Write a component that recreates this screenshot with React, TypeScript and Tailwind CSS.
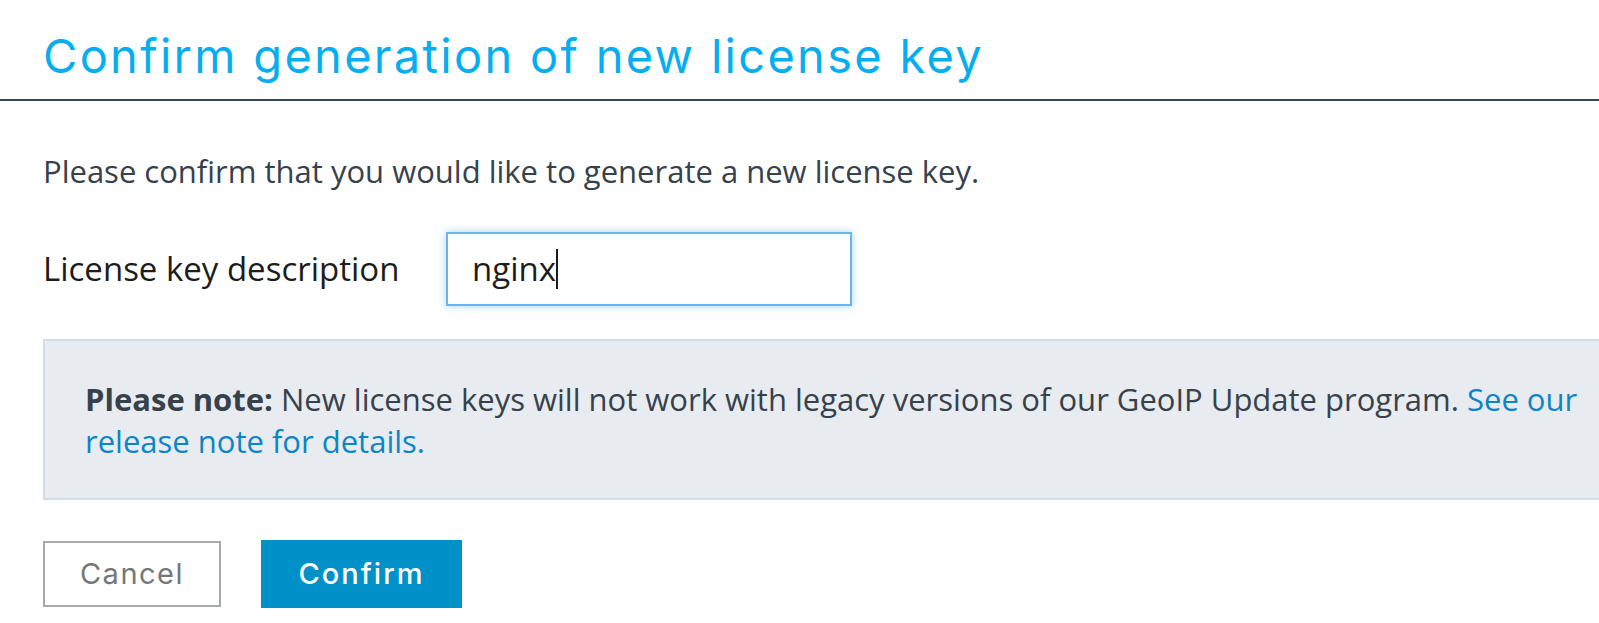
import React from "react";

const body = { fontFamily: '"Open Sans", "Noto Sans", sans-serif' };
const display = { fontFamily: 'Inter, "Noto Sans", sans-serif' };

export default function App() {
  return (
    <div className="w-full h-[623px] overflow-hidden bg-white">
      <div className="px-[43px] pt-[27px] pb-[15px]">
        <h1
          className="text-[47px] leading-[57px] font-normal text-[#05aef0] tracking-[2.3px]"
          style={display}
        >
          Confirm generation of new license key
        </h1>
      </div>
      <div className="h-[2px] w-full bg-[#37474f]" />
      <div className="px-[43px] pt-[49px]" style={body}>
        <p className="text-[31px] leading-[42px] text-[#36414c]">
          Please confirm that you would like to generate a new license key.
        </p>
        <div className="mt-[40px] flex items-center">
          <label className="w-[403px] shrink-0 text-[33px] leading-[42px] text-[#1c1c1c]">
            License key description
          </label>
          <div className="w-[406px] h-[74px] shrink-0 border-2 border-[#6cb4ef] bg-white shadow-[0_0_8px_rgba(102,175,233,0.55)] flex items-center pl-[24px]">
            <span className="text-[33px] leading-[42px] text-[#1c1c1c]">nginx</span>
            <span className="inline-block w-[2px] h-[40px] bg-[#1c1c1c]" />
          </div>
        </div>
        <div className="mt-[33px] w-[1620px] border-2 border-[#d4dce4] bg-[#e8ebf0] pl-[40px] pr-[40px] pt-[37px] pb-[36px]">
          <p className="text-[31px] leading-[42px] text-[#36414c]">
            <strong className="font-bold">Please note:</strong> New license keys will not work with legacy
            versions of our GeoIP Update program.{" "}
            <a href="#" className="text-[#0a86c8]">
              See our release note for details.
            </a>
          </p>
        </div>
        <div className="mt-[40px] flex items-center gap-[40px]" style={display}>
          <button className="w-[178px] h-[66px] border-2 border-[#a7aaad] bg-white text-[29px] tracking-[1.5px] text-[#74777a]">
            Cancel
          </button>
          <button className="w-[201px] h-[68px] bg-[#0091c8] text-[29px] tracking-[2px] font-medium text-white">
            Confirm
          </button>
        </div>
      </div>
    </div>
  );
}
